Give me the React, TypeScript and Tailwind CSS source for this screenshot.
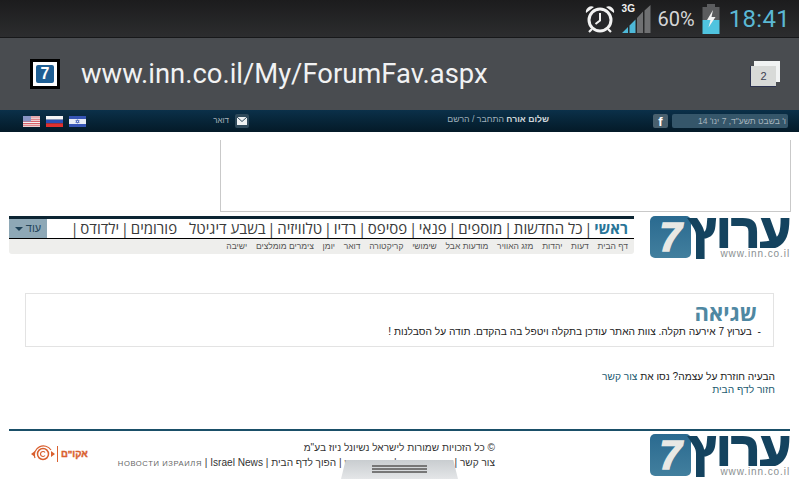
const sub = ["דף הבית", "דעות", "יהדות", "מזג האוויר", "מודעות אבל", "שימושי", "קריקטורה", "דואר", "יומן", "צימרים מומלצים", "ישיבה"];
const menu = ["כל החדשות", "מוספים", "פנאי", "פסיפס", "רדיו", "טלוויזיה"];

function Logo() {
  return (
    <div className="relative flex h-[42px] w-[141px] items-start justify-between" dir="ltr">
      <div className="flex h-[42px] w-[41px] items-center justify-center rounded-[5px] bg-gradient-to-b from-[#2a6a90] to-[#427f9e]">
        <span className="text-[40px] font-bold italic leading-[40px] text-[#e8e8e4] [-webkit-text-stroke:1.5px_#e8e8e4] [font-family:'Liberation_Sans',sans-serif]">7</span>
      </div>
      <span dir="rtl" className="absolute right-0 top-[1px] h-[30px] text-[50px] font-bold leading-[30px] text-[#14435f] [-webkit-text-stroke:2px_#14435f] [font-family:'Liberation_Sans',sans-serif]">ערוץ</span>
      <span className="absolute bottom-[-1px] right-[1px] bg-white pl-[2px] text-[10px] leading-[11px] tracking-[0.9px] text-[#8a8f92] [font-family:'Liberation_Sans',sans-serif]">www.inn.co.il</span>
    </div>
  );
}

function Flag({ kind }: { kind: "us" | "ru" | "il" }) {
  if (kind === "us")
    return (
      <svg width="17" height="11" viewBox="0 0 17 11">
        <rect width="17" height="11" fill="#f2f2f2" />
        <path d="M0 1h17M0 3.2h17M0 5.4h17M0 7.6h17M0 9.8h17" stroke="#d9626a" strokeWidth="1.1" />
        <rect width="8" height="5.5" fill="#8a95c4" />
      </svg>
    );
  if (kind === "ru")
    return (
      <svg width="17" height="11" viewBox="0 0 17 11">
        <rect width="17" height="3.7" fill="#f5f5f5" />
        <rect y="3.7" width="17" height="3.6" fill="#2c4fb5" />
        <rect y="7.3" width="17" height="3.7" fill="#e0302e" />
      </svg>
    );
  return (
    <svg width="17" height="11" viewBox="0 0 17 11">
      <rect width="17" height="11" fill="#e8ecf6" />
      <rect y="0" width="17" height="3" fill="#3655b5" />
      <rect y="8" width="17" height="3" fill="#3655b5" />
      <path d="M8.500 3.600l1.700 2.900H6.800zM8.500 7.300L6.800 4.400h3.400z" fill="none" stroke="#3655b5" strokeWidth="0.6" />
    </svg>
  );
}

export default function App() {
  return (
    <div className="relative h-[479px] w-[799px] overflow-hidden bg-white [font-family:'Liberation_Sans',sans-serif]">
      {/* Status bar */}
      <div className="flex h-[38px] items-center border-b border-[#17181a] bg-gradient-to-b from-[#1c1c1d] to-[#2c2d2f] pr-[9px]" dir="ltr">
        <div className="ml-auto flex items-center">
          <svg width="30" height="28" viewBox="0 0 30 28" className="mr-[6px]">
            <circle cx="15" cy="15" r="11" fill="#26272a" stroke="#f2f2f2" strokeWidth="3" />
            <path d="M15 8v7.500l-4.500 3.500" fill="none" stroke="#f2f2f2" strokeWidth="2" />
            <path d="M1 8a5.500 5.500 0 0 1 8-6zM29 8a5.500 5.500 0 0 0-8-6z" fill="#f2f2f2" />
            <path d="M7 24l-3 3M23 24l3 3" stroke="#f2f2f2" strokeWidth="2.200" />
          </svg>
          <div className="relative mr-[6px] h-[30px] w-[31px]">
            <svg width="31" height="30" viewBox="0 0 31 30">
              <path d="M1 29h6v-6zM8.500 29h6V15.500l-6 6z" fill="#4db8d8" />
              <path d="M16 29h6V7.500l-6 6.500zM23.500 29h6V1l-6 5.500z" fill="#6f7072" />
            </svg>
            <span className="absolute left-[1px] top-[-1px] text-[10px] font-bold leading-[12px] text-[#f0f0f0]">3G</span>
          </div>
          <span className="mr-[7px] text-[20px] leading-[24px] text-[#d5d6d7] [font-family:Roboto,sans-serif]">60%</span>
          <svg width="18" height="30" viewBox="0 0 18 30" className="mr-[9px]">
            <rect x="5" y="0" width="8" height="3" fill="#5b5c5e" />
            <rect x="0.500" y="3" width="17" height="13" fill="#5b5c5e" />
            <rect x="0.500" y="16" width="17" height="14" fill="#4fc3df" />
            <path d="M11 6l-6 10h3.500l-2 7.500 7-10.500H9.500z" fill="#f4f4f4" />
          </svg>
          <span className="text-[24px] leading-[28px] tracking-[0.3px] text-[#5bb8d4] [font-family:Roboto,sans-serif]">18:41</span>
        </div>
      </div>

      {/* URL bar */}
      <div className="flex h-[72px] items-center bg-[#494c50] pl-[30px] pr-[19px]" dir="ltr">
        <div className="flex h-[30px] w-[30px] items-center justify-center border-[3px] border-black bg-white">
          <div className="flex h-[18px] w-[18px] items-center justify-center rounded-[2px] bg-[#1f5f94]">
            <span className="text-[16px] font-bold leading-none text-white">7</span>
          </div>
        </div>
        <span className="ml-[21px] text-[27.400px] leading-[32px] text-[#f1f2f3] [font-family:Roboto,sans-serif]">www.inn.co.il/My/ForumFav.aspx</span>
        <div className="relative ml-auto h-[26px] w-[30px]">
          <div className="absolute right-0 top-0 h-[21px] w-[26px] bg-[#f1f3f3]" />
          <div className="absolute bottom-0 left-0 flex h-[21px] w-[26px] items-center justify-center border-l border-b border-[#2d3350] bg-[#d8dad8] text-[11px] text-[#3c4050]">2</div>
        </div>
      </div>

      {/* Site strip */}
      <div className="flex h-[22px] items-center bg-gradient-to-b from-[#0b3049] to-[#041a28] pl-[23px]" dir="ltr">
        <div className="flex items-center gap-[6px]">
          <Flag kind="us" />
          <Flag kind="ru" />
          <Flag kind="il" />
        </div>
        <span className="ml-[126px] w-[17px] text-[8px] text-[#aab4bb]" dir="rtl">דואר</span>
        <div className="ml-[6px] flex h-[14px] w-[14px] items-center justify-center rounded-[2px] bg-[#2f4a5b]">
          <svg width="10" height="8" viewBox="0 0 10 8">
            <rect width="10" height="8" fill="#eef1f2" />
            <path d="M0 0l5 4.500L10 0" fill="none" stroke="#2f4a5b" strokeWidth="1" />
          </svg>
        </div>
        <span className="mb-[2px] ml-[199px] w-[101px] whitespace-nowrap text-[8.700px] text-[#9fb0bb]" dir="rtl">
          <b className="font-bold text-[#cfd6da]">שלום אורח</b> התחבר / הרשם
        </span>
        <div className="ml-[104px] flex h-[14px] w-[15px] items-center justify-center rounded-[2px] bg-[#48606e]">
          <span className="text-[13px] font-bold leading-none text-white">f</span>
        </div>
        <div className="ml-[4px] flex h-[14px] w-[116px] items-center rounded-[2px] bg-[#35566a] px-[2px] text-[8.500px] text-[#a7b5be]" dir="rtl">
          ו' בשבט תשע"ד, 7 ינו' 14
        </div>
      </div>

      {/* Ad */}
      <div className="ml-[220px] mt-[8px] h-[72px] w-[571px] border-x border-b border-[#c9c9c9]" />

      {/* Header */}
      <div className="mt-[4px] flex items-start justify-between px-[8px] pl-[9px]" dir="ltr">
        <div className="w-[625px]">
          <div className="h-[3px] bg-[#0c2533]" />
          <div className="flex h-[20px] items-stretch border-b border-black" dir="rtl">
            <div className="flex flex-1 items-center whitespace-nowrap pr-[6px] text-[15px] leading-none text-[#3a3a3a] [font-family:'Open_Sans','Liberation_Sans',sans-serif]">
              <span className="font-bold text-[#2a7598]">ראשי</span>
              <span className="mx-[1.700px]">|</span>
              {menu.map((m) => (
                <span key={m} className="flex items-center">
                  {m}
                  <span className="mx-[1.700px]">|</span>
                </span>
              ))}
              <span>בשבע דיגיטל</span>
              <span className="mr-[12px]">פורומים</span>
              <span className="mx-[1.700px]">|</span>
              <span>ילדודס</span>
              <span className="mx-[1.700px]">|</span>
            </div>
            <div className="flex w-[38px] shrink-0 items-center justify-center gap-[3px] bg-[#8ea8b6] text-[11px] text-[#25465a]">
              עוד
              <span className="h-0 w-0 border-x-[4px] border-t-[4px] border-x-transparent border-t-[#1e4258]" />
            </div>
          </div>
          <div className="flex h-[15px] items-center gap-[8.700px] rounded-b-[3px] bg-[#eeeeec] pr-[6px] text-[8.500px] text-[#555]" dir="rtl">
            {sub.map((s) => (
              <span key={s} className="whitespace-nowrap">{s}</span>
            ))}
          </div>
        </div>
        <Logo />
      </div>

      {/* Error */}
      <div className="mx-[25px] mt-[35px] h-[54px] border border-[#e3e3e3] px-[19px] pt-[5px]" dir="rtl">
        <div className="-mr-[3px] text-[22px] font-bold leading-[26px] text-[#4f88a2] [font-family:'Open_Sans','Liberation_Sans',sans-serif]">שגיאה</div>
        <div className="-mr-[7px] whitespace-nowrap text-[10.200px] leading-[14px] text-[#222]">
          - &nbsp;בערוץ 7 אירעה תקלה. צוות האתר עודכן בתקלה ויטפל בה בהקדם. תודה על הסבלנות !
        </div>
      </div>
      <div className="mx-[24px] mt-[23px] text-[10.200px] leading-[13px] text-[#222]" dir="rtl">
        <div>
          הבעיה חוזרת על עצמה? נסו את <span className="text-[#1c5a70]">צור קשר</span>
        </div>
        <div className="text-[#1c5a70]">חזור לדף הבית</div>
      </div>

      {/* Footer */}
      <div className="mx-[9px] mt-[33px] h-[2px] bg-[#1a4f68]" />
      <div className="mt-[3px] flex items-start px-[8px] pl-[31px]" dir="ltr">
        <div className="mt-[11px] flex items-center text-[#d9602f]">
          <svg width="24" height="18" viewBox="0 0 24 18">
            <circle cx="12" cy="9" r="5.500" fill="none" stroke="#d9602f" strokeWidth="1.500" />
            <path d="M4 13a9 9 0 0 1 16 -8" fill="none" stroke="#d9602f" strokeWidth="1.200" />
            <path d="M14 7.500a2.500 2.500 0 1 0 0 3" fill="none" stroke="#d9602f" strokeWidth="1.200" />
            <path d="M0 9l4-3v6zM24 9l-4-3v6z" fill="#d9602f" />
          </svg>
          <span className="ml-[2px] h-[16px] border-l border-[#d9602f]" />
          <span className="ml-[3px] text-[9.500px] font-bold [-webkit-text-stroke:0.4px_#d9602f]">אקו"ם</span>
        </div>
        <div className="ml-auto mr-[155px] mt-[6px] text-[10.100px] leading-[15px] text-[#333]" dir="rtl">
          <div>© כל הזכויות שמורות לישראל נשיונל ניוז בע"מ</div>
          <div className="whitespace-nowrap">
            <bdi>צור קשר</bdi> | <bdi className="text-[9.600px]">פרסום באתר</bdi> | <bdi className="text-[9.600px]">תנאי שימוש</bdi> | <bdi>הפוך לדף הבית</bdi> | <bdi>Israel News</bdi> | <bdi className="text-[7.600px] tracking-[0.6px] text-[#666]">НОВОСТИ ИЗРАИЛЯ</bdi>
          </div>
        </div>
        <Logo />
      </div>

      {/* Handle */}
      <div className="absolute bottom-0 left-[341px] flex h-[19px] w-[117px] flex-col items-center gap-[1px] bg-gradient-to-b from-[#c9cdd0] to-[#e4e6e8] pt-[5px] [clip-path:polygon(4%_0,96%_0,100%_100%,0_100%)]">
        <div className="h-[2px] w-[55px] bg-[#777]" />
        <div className="h-[2px] w-[55px] bg-[#777]" />
        <div className="h-[2px] w-[55px] bg-[#777]" />
      </div>
    </div>
  );
}
